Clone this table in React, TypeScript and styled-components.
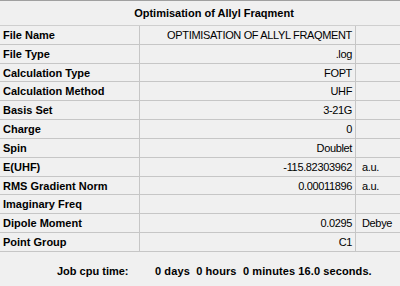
import { Fragment } from "react";
import styled, { createGlobalStyle } from "styled-components";

const GlobalStyle = createGlobalStyle`
  html, body { margin: 0; padding: 0; background: #f0f0f0; }
  body { font-family: "Liberation Sans", Arial, sans-serif; }
`;

const Panel = styled.div`
  width: 400px;
  height: 286px;
  background: #f0f0f0;
  border-top: 1px solid #a0a0a0;
  box-sizing: border-box;
  display: flex;
  flex-direction: column;
  color: #000;
`;

const Title = styled.div`
  height: 25px;
  display: flex;
  align-items: center;
  justify-content: center;
  padding-left: 28px;
  font-size: 11px;
  font-weight: bold;
  border-bottom: 1px solid #cfcfcf;
  box-sizing: border-box;
`;

const Table = styled.div`
  display: grid;
  grid-template-columns: 139px 1px 215px 1px 44px;
  grid-auto-rows: 18.83px;
`;

const Cell = styled.div<{ $align?: "left" | "right" }>`
  display: flex;
  align-items: center;
  justify-content: ${(p) => (p.$align === "right" ? "flex-end" : "flex-start")};
  padding: ${(p) => (p.$align === "right" ? "0 3px 0 0" : "0 0 0 3px")};
  font-size: 11px;
  letter-spacing: -0.35px;
  border-bottom: 1px solid #c6c6c6;
  box-sizing: border-box;
  white-space: nowrap;
  overflow: hidden;
`;

const Label = styled(Cell)`
  font-weight: bold;
  letter-spacing: 0;
`;

const Unit = styled(Cell)`
  padding-left: 6px;
`;

const Divider = styled.div`
  background: #c6c6c6;
`;

const Footer = styled.div`
  flex: 1;
  display: flex;
  align-items: center;
  font-size: 11px;
  font-weight: bold;
  padding-top: 4px;
`;

const FooterLabel = styled.span`
  width: 98px;
  margin-left: 57px;
`;

const FooterValue = styled.span`
  letter-spacing: 0.1px;
`;

const rows: [string, string, string][] = [
  ["File Name", "OPTIMISATION OF ALLYL FRAQMENT", ""],
  ["File Type", ".log", ""],
  ["Calculation Type", "FOPT", ""],
  ["Calculation Method", "UHF", ""],
  ["Basis Set", "3-21G", ""],
  ["Charge", "0", ""],
  ["Spin", "Doublet", ""],
  ["E(UHF)", "-115.82303962", "a.u."],
  ["RMS Gradient Norm", "0.00011896", "a.u."],
  ["Imaginary Freq", "", ""],
  ["Dipole Moment", "0.0295", "Debye"],
  ["Point Group", "C1", ""],
];

export default function App() {
  return (
    <>
      <GlobalStyle />
      <Panel>
        <Title>Optimisation of Allyl Fraqment</Title>
        <Table>
          {rows.map(([label, value, unit]) => (
            <Fragment key={label}>
              <Label>{label}</Label>
              <Divider />
              <Cell $align="right">{value}</Cell>
              <Divider />
              <Unit>{unit}</Unit>
            </Fragment>
          ))}
        </Table>
        <Footer>
          <FooterLabel>Job cpu time:</FooterLabel>
          <FooterValue>0 days&nbsp;&nbsp;0 hours&nbsp;&nbsp;0 minutes&nbsp;16.0 seconds.</FooterValue>
        </Footer>
      </Panel>
    </>
  );
}
